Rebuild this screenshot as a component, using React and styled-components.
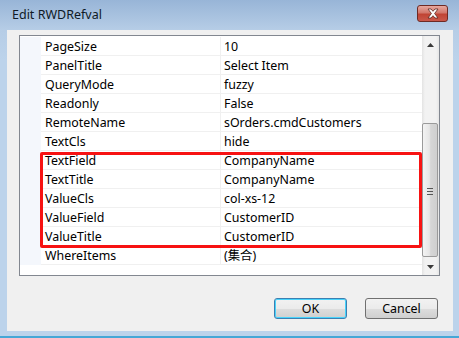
import React from "react";
import styled, { createGlobalStyle } from "styled-components";

const GlobalStyle = createGlobalStyle`
  html, body {
    margin: 0;
    padding: 0;
    background: #bcd3eb;
  }
  body {
    font-family: "Noto Sans", "Noto Sans CJK SC", sans-serif;
    font-size: 12px;
    color: #000;
  }
`;

const Window = styled.div`
  width: 459px;
  height: 338px;
  box-sizing: border-box;
  display: flex;
  flex-direction: column;
  background: linear-gradient(to bottom, #98b5d7 0px, #b6cde6 30px, #bcd3eb 60px);
  border-bottom: 2px solid #46a7d6;
`;

const TitleBar = styled.div`
  height: 30px;
  display: flex;
  align-items: center;
  padding: 0 11px 0 12px;
  flex-shrink: 0;
`;

const Title = styled.span`
  flex: 1;
  font-size: 12.5px;
  color: #0f1a26;
  padding-bottom: 2px;
`;

const CloseButton = styled.div`
  width: 29px;
  height: 15px;
  margin-bottom: 4px;
  border: 1px solid #6e2a24;
  border-radius: 3px;
  background: linear-gradient(to bottom, #e7a89e 0%, #d2776b 45%, #c04434 55%, #c9584a 100%);
  display: flex;
  align-items: center;
  justify-content: center;
`;

const Client = styled.div`
  flex: 1;
  margin: 0 6px 5px 7px;
  background: #f0f0f0;
  padding: 5px 13px 0 12px;
  display: flex;
  flex-direction: column;
`;

const Grid = styled.div`
  position: relative;
  height: 241px;
  box-sizing: border-box;
  border: 1px solid #828790;
  background: #fff;
  display: flex;
`;

const Rows = styled.div`
  flex: 1;
  padding-top: 1px;
`;

const Row = styled.div`
  display: grid;
  grid-template-columns: 21px 179px 1fr;
  height: 19px;
`;

const Margin = styled.div`
  background: #f4f7fc;
`;

const Cell = styled.div`
  border-bottom: 1px solid #f0f0f0;
  border-left: ${(p) => (p.divider ? "1px solid #f0f0f0" : "none")};
  padding-left: ${(p) => (p.divider ? "3px" : "4px")};
  font-size: 12.4px;
  line-height: 20px;
  white-space: nowrap;
  overflow: hidden;
`;

const ScrollBar = styled.div`
  width: 17px;
  background: linear-gradient(to right, #e3e3e3 0, #f2f2f2 3px, #f2f2f2 14px, #e6e6e6 17px);
  display: flex;
  flex-direction: column;
`;

const ArrowButton = styled.div`
  height: 17px;
  display: flex;
  align-items: center;
  justify-content: center;
`;

const Track = styled.div`
  flex: 1;
`;

const Thumb = styled.div`
  height: 134px;
  margin: 0 1px 1px 0;
  box-sizing: border-box;
  border: 1px solid #9a9a9a;
  border-radius: 2px;
  background: linear-gradient(to right, #f3f3f3 0%, #e6e6e6 45%, #d6d6d6 55%, #cfcfcf 100%);
  display: flex;
  align-items: center;
  justify-content: center;
`;

const Grip = styled.div`
  width: 6px;
  height: 7px;
  background: repeating-linear-gradient(to bottom, #555 0 1px, transparent 1px 3px);
  margin-top: 2px;
`;

const Highlight = styled.div`
  position: absolute;
  left: 20px;
  top: 116px;
  width: 382px;
  height: 96px;
  box-sizing: border-box;
  border: 3px solid #f71212;
  border-radius: 2px;
  pointer-events: none;
`;

const ButtonRow = styled.div`
  display: flex;
  justify-content: flex-end;
  gap: 18px;
  padding-top: 22px;
  padding-right: 2px;
`;

const Button = styled.div`
  width: 73px;
  height: 21px;
  box-sizing: border-box;
  border: 1px solid ${(p) => (p.primary ? "#3c7fb1" : "#707070")};
  box-shadow: ${(p) => (p.primary ? "inset 0 0 0 1px #48d3fb" : "none")};
  border-radius: 3px;
  background: linear-gradient(to bottom, #f2f2f2 0%, #ebebeb 50%, #dddddd 51%, #cfcfcf 100%);
  display: flex;
  align-items: center;
  justify-content: center;
  font-size: 12.4px;
  padding-bottom: 1px;
`;

const properties = [
  ["PageSize", "10"],
  ["PanelTitle", "Select Item"],
  ["QueryMode", "fuzzy"],
  ["Readonly", "False"],
  ["RemoteName", "sOrders.cmdCustomers"],
  ["TextCls", "hide"],
  ["TextField", "CompanyName"],
  ["TextTitle", "CompanyName"],
  ["ValueCls", "col-xs-12"],
  ["ValueField", "CustomerID"],
  ["ValueTitle", "CustomerID"],
  ["WhereItems", "(集合)"],
];

const Arrow = ({ up }) => (
  <svg width="7" height="4" viewBox="0 0 7 4">
    <path d={up ? "M0 4 L3.5 0 L7 4 Z" : "M0 0 L3.5 4 L7 0 Z"} fill="#3a3a3a" />
  </svg>
);

const CloseIcon = () => (
  <svg width="14" height="11" viewBox="0 0 14 11">
    <path
      d="M2 1 L5 1 L7 3.3 L9 1 L12 1 L8.6 5.5 L12 10 L9 10 L7 7.7 L5 10 L2 10 L5.4 5.5 Z"
      fill="#fff"
      stroke="#5a2620"
      strokeWidth="0.8"
      strokeLinejoin="round"
    />
  </svg>
);

export default function App() {
  return (
    <>
      <GlobalStyle />
      <Window>
        <TitleBar>
          <Title>Edit RWDRefval</Title>
          <CloseButton>
            <CloseIcon />
          </CloseButton>
        </TitleBar>
        <Client>
          <Grid>
            <Rows>
              {properties.map(([name, value]) => (
                <Row key={name}>
                  <Margin />
                  <Cell>{name}</Cell>
                  <Cell divider>{value}</Cell>
                </Row>
              ))}
            </Rows>
            <ScrollBar>
              <ArrowButton>
                <Arrow up />
              </ArrowButton>
              <Track />
              <Thumb>
                <Grip />
              </Thumb>
              <ArrowButton>
                <Arrow />
              </ArrowButton>
            </ScrollBar>
            <Highlight />
          </Grid>
          <ButtonRow>
            <Button primary>OK</Button>
            <Button>Cancel</Button>
          </ButtonRow>
        </Client>
      </Window>
    </>
  );
}
